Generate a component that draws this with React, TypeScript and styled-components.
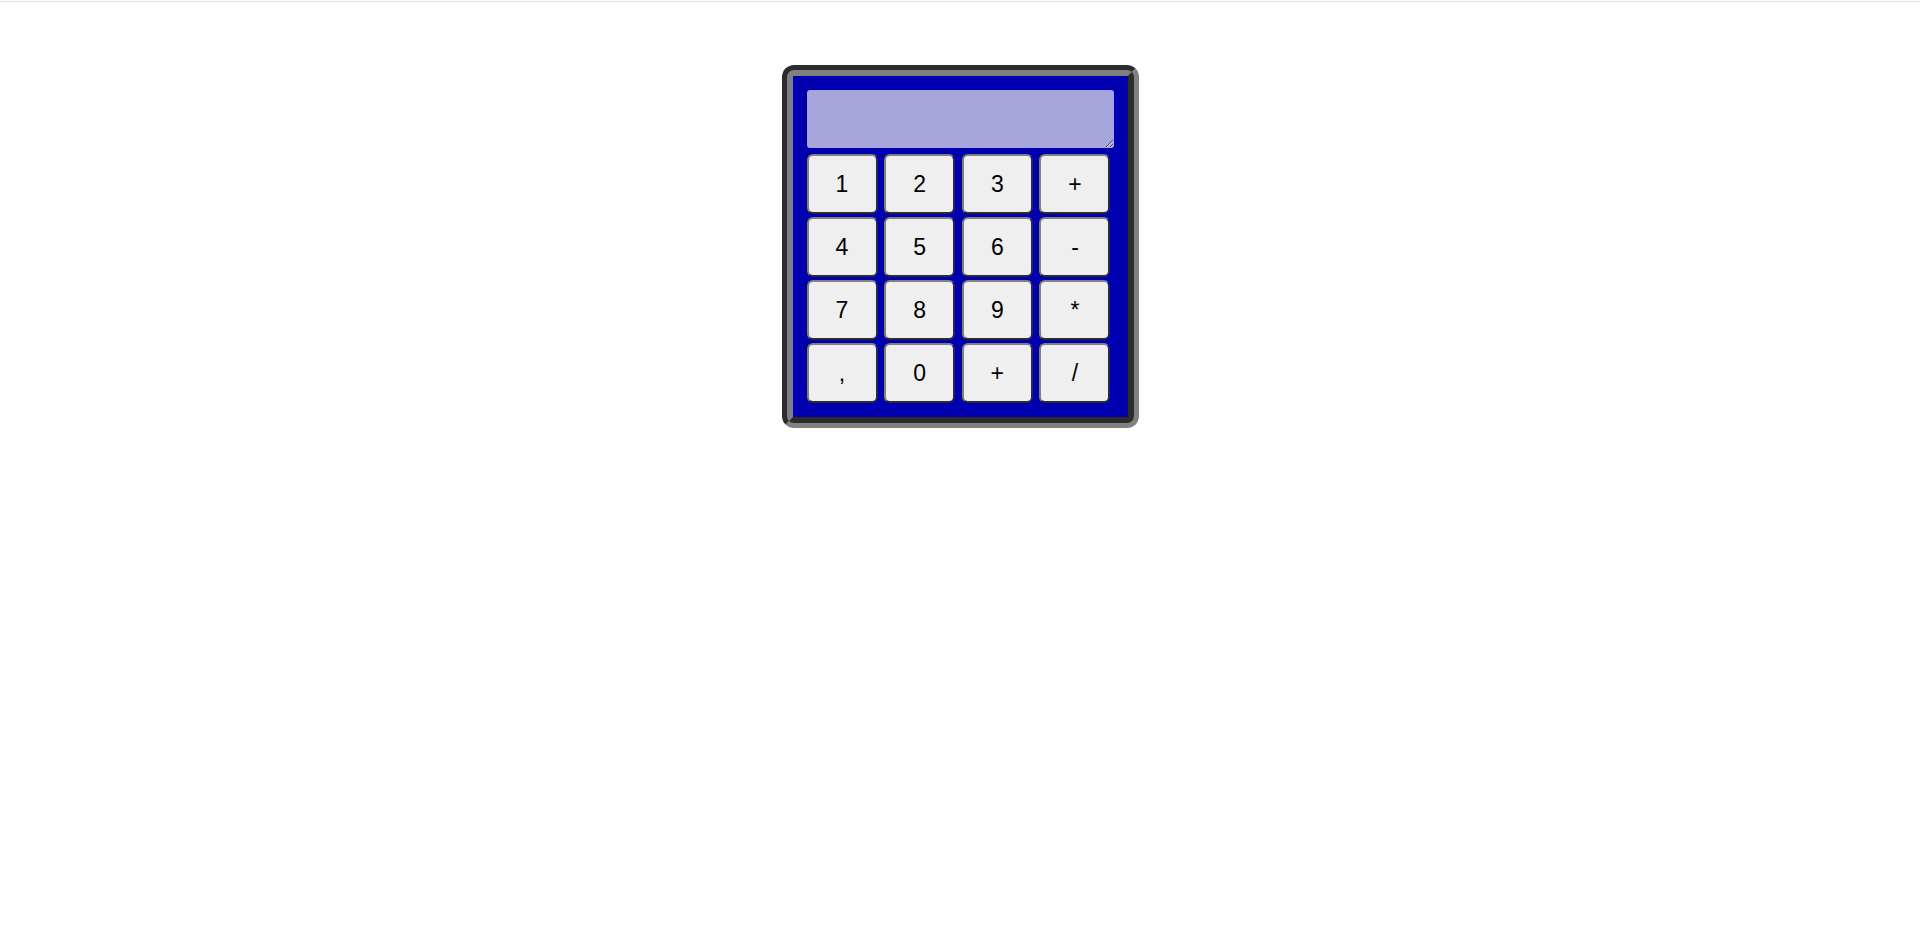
import React from "react";
import styled, { createGlobalStyle } from "styled-components";

const GlobalStyle = createGlobalStyle`
  html, body {
    margin: 0;
    padding: 0;
    background: #ffffff;
    font-family: "Liberation Sans", Arial, sans-serif;
  }
`;

const TopRule = styled.div`
  height: 1px;
  margin-top: 1px;
  background: #dddddd;
`;

const Page = styled.main`
  display: flex;
  justify-content: center;
  padding-top: 63px;
`;

const Calculator = styled.div`
  box-sizing: content-box;
  width: 307px;
  display: flex;
  flex-direction: column;
  gap: 6px;
  padding: 14px 14px 14px;
  background: #0000b0;
  border: 11px groove #808080;
  border-radius: 12px;
`;

const Display = styled.textarea`
  box-sizing: border-box;
  width: 307px;
  height: 58px;
  margin: 0;
  padding: 4px 6px;
  border: none;
  border-radius: 3px;
  background: #a6a6dd;
  color: #000;
  font-family: "Liberation Sans", Arial, sans-serif;
  font-size: 22px;
  outline: none;
`;

const Keypad = styled.div`
  display: grid;
  grid-template-columns: repeat(4, 71px);
  grid-auto-rows: 60px;
  column-gap: 6.67px;
  row-gap: 3px;
`;

const Key = styled.button`
  box-sizing: border-box;
  margin: 0;
  padding: 0;
  background: #efefef;
  border: 2px outset #808080;
  border-radius: 6px;
  color: #000;
  font-family: "Liberation Sans", Arial, sans-serif;
  font-size: 23px;
  cursor: pointer;
`;

const keys = ["1", "2", "3", "+", "4", "5", "6", "-", "7", "8", "9", "*", ",", "0", "+", "/"];

export default function App() {
  return (
    <>
      <GlobalStyle />
      <TopRule />
      <Page>
        <Calculator>
          <Display />
          <Keypad>
            {keys.map((k, i) => (
              <Key key={i}>{k}</Key>
            ))}
          </Keypad>
        </Calculator>
      </Page>
    </>
  );
}
